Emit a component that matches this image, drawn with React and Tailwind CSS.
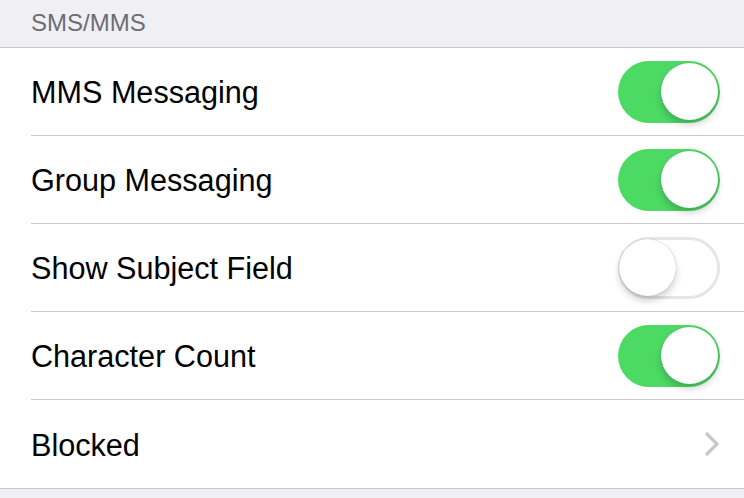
import React from "react";

function Toggle({ on }) {
  return (
    <div
      className={`relative w-[102px] h-[62px] rounded-full flex items-center ${
        on ? "bg-[#4cd964] justify-end" : "bg-white border-[3px] border-[#e5e5ea] justify-start"
      }`}
    >
      <div
        className={`w-[57px] h-[57px] rounded-full bg-white shadow-[0_5px_7px_rgba(0,0,0,0.18),0_0_1px_rgba(0,0,0,0.35)] ${
          on ? "mr-[2px]" : "-ml-[2px]"
        }`}
      />
    </div>
  );
}

function Row({ label, children, last }) {
  return (
    <div className="flex h-[88px] pl-[31px] bg-white">
      <div
        className={`flex-1 flex items-center justify-between pr-[24px] ${
          last ? "" : "border-b border-[#c8c7cc]"
        }`}
      >
        <span className="text-[30.6px] text-black leading-none pt-[2px]">{label}</span>
        {children}
      </div>
    </div>
  );
}

export default function App() {
  const rows = [
    ["MMS Messaging", true],
    ["Group Messaging", true],
    ["Show Subject Field", false],
    ["Character Count", true],
  ];
  return (
    <div
      className="w-[744px] h-[498px] bg-[#efeff4] overflow-hidden"
      style={{ fontFamily: '"Liberation Sans", Arial, sans-serif' }}
    >
      <div className="h-[48px] flex items-center pl-[31px] pb-[2px] border-b border-[#c8c7cc]">
        <span className="text-[24px] text-[#6d6d72] leading-none">SMS/MMS</span>
      </div>
      {rows.map(([l, on]) => (
        <Row key={l} label={l}>
          <Toggle on={on} />
        </Row>
      ))}
      <Row label="Blocked" last>
        <svg width="18" height="26" viewBox="0 0 18 26" className="mr-[-1px]">
          <path d="M3 2 L14 13 L3 24" fill="none" stroke="#c7c7cc" strokeWidth="3.2" />
        </svg>
      </Row>
      <div className="border-t border-[#c8c7cc]" />
    </div>
  );
}
